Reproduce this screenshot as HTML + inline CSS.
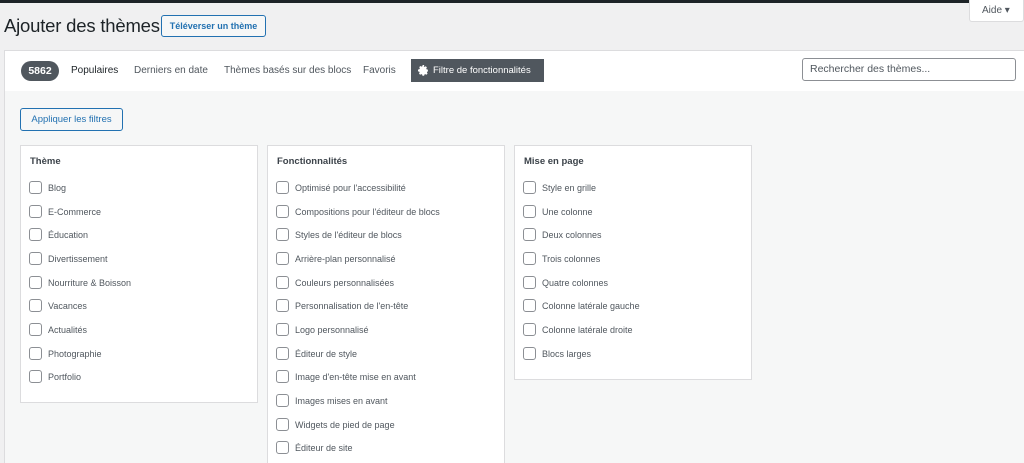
<!DOCTYPE html><html><head><style>
html,body{margin:0;width:1024px;height:463px;overflow:hidden}
body{background:#f0f0f1;font-family:"Liberation Sans",sans-serif;position:relative;color:#1d2327}
.top{position:absolute;left:0;top:0;width:1024px;height:3px;background:#1d2327}
h1{position:absolute;left:4px;top:15px;margin:0;font-size:18.5px;font-weight:400;color:#1d2327;letter-spacing:-0.2px}
.up{position:absolute;left:161px;top:15px;width:105px;height:22px;border:1px solid #2271b1;border-radius:3px;background:#f6f7f7;color:#2271b1;font-size:9px;font-weight:bold;line-height:20px;text-align:center;box-sizing:border-box}
.aide{position:absolute;left:969px;top:0;width:55px;height:22px;background:#fff;border:1px solid #dcdcde;border-top:0;border-radius:0 0 3px 3px;font-size:10px;color:#50575e;line-height:22px;padding-left:12px;box-sizing:border-box}
.panel{position:absolute;left:4px;top:50px;width:1020px;height:412px;background:#f6f7f7;border:1px solid #dcdcde;border-right:0;border-bottom:0;overflow:hidden}
.bar{position:absolute;left:0;top:0;right:0;height:40px;background:#fff}
.count{position:absolute;left:16px;top:10px;width:38px;height:20px;border-radius:10px;background:#50575e;color:#fff;font-size:10.5px;font-weight:bold;line-height:20px;text-align:center}
.tab{position:absolute;top:14px;font-size:10px;color:#50575e}
.ff{position:absolute;left:406px;top:8px;width:133px;height:23px;background:#50575e;color:#fff;font-size:9.5px;line-height:23px;padding-left:22px;box-sizing:border-box}
.search{position:absolute;left:797px;top:7px;width:214px;height:23px;border:1px solid #8c8f94;border-radius:3px;background:#fff;font-size:10.5px;color:#50575e;line-height:21px;padding-left:7px;box-sizing:border-box}
.apply{position:absolute;left:15px;top:57px;width:103px;height:23px;border:1px solid #2271b1;border-radius:3px;background:#f6f7f7;color:#2271b1;font-size:9.5px;line-height:21px;text-align:center;box-sizing:border-box}
.box{position:absolute;top:94px;width:238px;background:#fff;border:1px solid #dcdcde;box-sizing:border-box}
.box h4{margin:0;position:absolute;left:9px;top:10px;font-size:9.5px;font-weight:bold;color:#3c434a}
.it{position:absolute;left:8px;font-size:9px;color:#50575e;line-height:13px}
.it:before{content:"";display:inline-block;width:11px;height:11px;border:1px solid #8c8f94;border-radius:3px;vertical-align:middle;margin-right:6px;margin-top:-2px}
</style></head><body>
<div class="top"></div>
<h1>Ajouter des thèmes</h1>
<div class="up">Téléverser un thème</div>
<div class="aide">Aide ▾</div>
<div class="panel">
<div class="bar">
<div class="count">5862</div>
<div class="tab" style="left:66px;color:#1d2327">Populaires</div>
<div class="tab" style="left:129px">Derniers en date</div>
<div class="tab" style="left:219px">Thèmes basés sur des blocs</div>
<div class="tab" style="left:358px">Favoris</div>
<div class="ff"><svg style="position:absolute;left:7px;top:6px" width="11" height="11" viewBox="0 0 20 20"><path fill="#fff" d="M10 6a4 4 0 100 8 4 4 0 000-8zm8 5.5v-3l-2.3-.6-.7-1.6 1.2-2-2.1-2.1-2 1.2-1.6-.7L11.5 0h-3l-.6 2.3-1.6.7-2-1.2-2.1 2.1 1.2 2-.7 1.6L0 8.5v3l2.3.6.7 1.6-1.2 2 2.1 2.1 2-1.2 1.6.7.6 2.3h3l.6-2.3 1.6-.7 2 1.2 2.1-2.1-1.2-2 .7-1.6z"/></svg>Filtre de fonctionnalités</div>
<div class="search">Rechercher des thèmes...</div>
</div>
<div class="apply">Appliquer les filtres</div>
<div class="box" style="left:15px;height:258px"><h4>Thème</h4>
<div class="it" style="top:36px">Blog</div><div class="it" style="top:60px">E-Commerce</div><div class="it" style="top:83px">Éducation</div><div class="it" style="top:107px">Divertissement</div><div class="it" style="top:131px">Nourriture &amp; Boisson</div><div class="it" style="top:154px">Vacances</div><div class="it" style="top:178px">Actualités</div><div class="it" style="top:202px">Photographie</div><div class="it" style="top:225px">Portfolio</div></div>
<div class="box" style="left:262px;height:330px"><h4>Fonctionnalités</h4>
<div class="it" style="top:36px">Optimisé pour l'accessibilité</div><div class="it" style="top:60px">Compositions pour l'éditeur de blocs</div><div class="it" style="top:83px">Styles de l'éditeur de blocs</div><div class="it" style="top:107px">Arrière-plan personnalisé</div><div class="it" style="top:131px">Couleurs personnalisées</div><div class="it" style="top:154px">Personnalisation de l'en-tête</div><div class="it" style="top:178px">Logo personnalisé</div><div class="it" style="top:202px">Éditeur de style</div><div class="it" style="top:225px">Image d'en-tête mise en avant</div><div class="it" style="top:249px">Images mises en avant</div><div class="it" style="top:273px">Widgets de pied de page</div><div class="it" style="top:296px">Éditeur de site</div></div>
<div class="box" style="left:509px;height:235px"><h4>Mise en page</h4>
<div class="it" style="top:36px">Style en grille</div><div class="it" style="top:60px">Une colonne</div><div class="it" style="top:83px">Deux colonnes</div><div class="it" style="top:107px">Trois colonnes</div><div class="it" style="top:131px">Quatre colonnes</div><div class="it" style="top:154px">Colonne latérale gauche</div><div class="it" style="top:178px">Colonne latérale droite</div><div class="it" style="top:202px">Blocs larges</div></div>
</div>
</body></html>
